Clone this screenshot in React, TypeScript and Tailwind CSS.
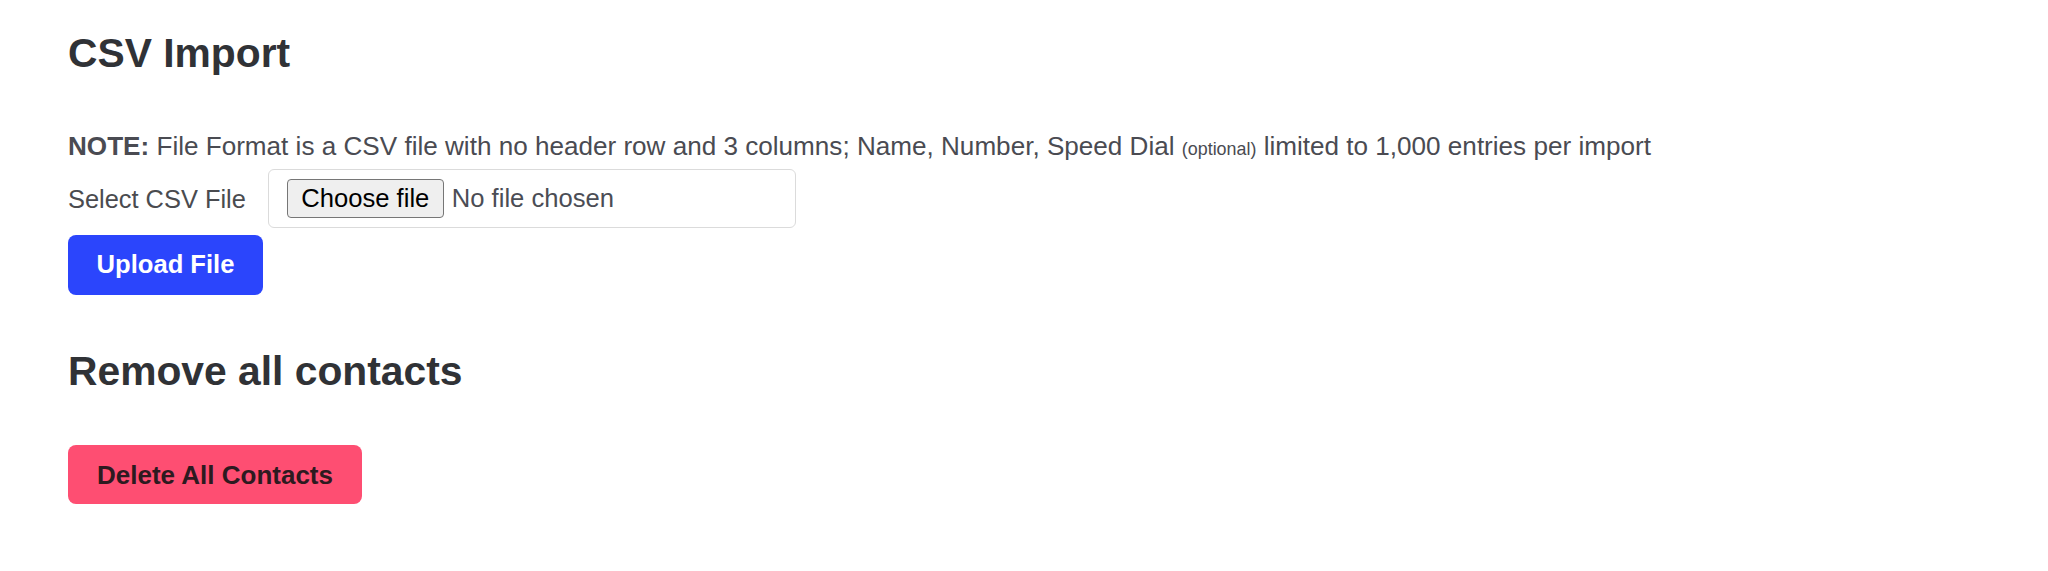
import React from "react";

export default function App() {
  return (
    <div className="min-h-[571px] w-full bg-white pl-[68px] pt-[29px] font-['Liberation_Sans',Arial,sans-serif]">
      <h1 className="text-[40.8px] font-bold leading-[48px] text-[#303236]">CSV Import</h1>

      <p className="mt-[53px] text-[26.1px] leading-[32px] text-[#4a4b52]">
        <span className="font-bold">NOTE:</span> File Format is a CSV file with no header row and 3 columns; Name,
        Number, Speed Dial <span className="text-[17.9px] leading-none">(optional)</span> limited to 1,000 entries per
        import
      </p>

      <div className="mt-[7px] flex items-center gap-[22px]">
        <label className="text-[25.4px] leading-[32px] text-[#4a4b4f]">Select CSV File</label>
        <div className="flex h-[59px] w-[528px] items-center rounded-[6px] border border-[#dbdbdb] bg-white pl-[18px]">
          <button
            type="button"
            className="flex h-[39px] w-[157px] items-center justify-center rounded-[4px] border border-[#767676] bg-[#efefef] text-[25.6px] leading-none text-black"
          >
            Choose file
          </button>
          <span className="ml-[8px] text-[25.6px] leading-none text-[#4b4d55]">No file chosen</span>
        </div>
      </div>

      <button
        type="button"
        className="mt-[7px] flex h-[60px] w-[195px] items-center justify-center rounded-[8px] bg-[#2b45fc] text-[25.6px] font-bold leading-none text-white"
      >
        Upload File
      </button>

      <h2 className="mt-[52px] text-[40.8px] font-bold leading-[48px] text-[#303236]">Remove all contacts</h2>

      <button
        type="button"
        className="mt-[50px] flex h-[59px] w-[294px] items-center justify-center rounded-[8px] bg-[#fe4e72] text-[26px] font-bold leading-none text-[#2d1a20]"
      >
        Delete All Contacts
      </button>
    </div>
  );
}
